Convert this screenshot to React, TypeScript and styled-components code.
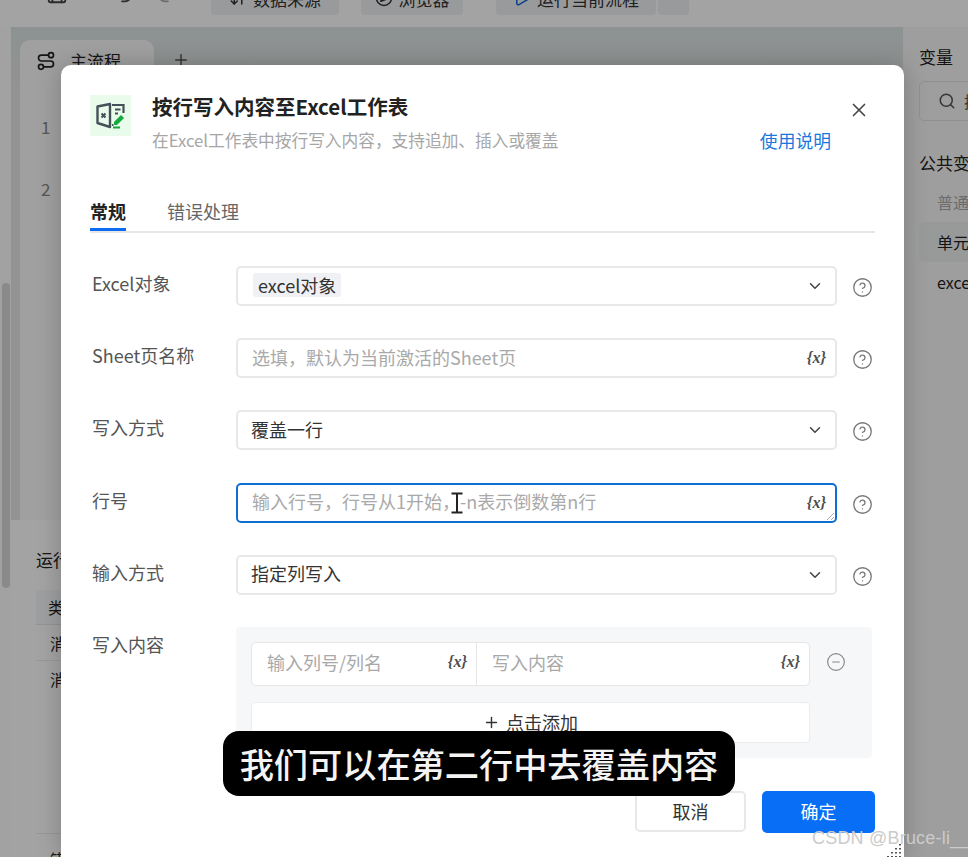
import React from 'react';
import styled, { createGlobalStyle } from 'styled-components';
import {
  ArrowDownUp,
  ChevronDown,
  CircleHelp,
  CircleMinus,
  Compass,
  Play,
  Plus,
  Redo2,
  Route,
  Save,
  Search,
  Undo2,
  X,
} from 'lucide-react';

const FONT = `"Noto Sans CJK SC", "Noto Sans", sans-serif`;

const GlobalStyle = createGlobalStyle`
  html, body {
    margin: 0;
    height: 100%;
    overflow: hidden;
    background: #fff;
    font-family: ${FONT};
  }
  * {
    box-sizing: border-box;
  }
`;

const ExcelIcon = () => (
  <svg width="41" height="41" viewBox="0 0 41 41" fill="none">
    <path d="M7.5 11.5 L20 9 V32 L7.5 28 Z" stroke="#465059" strokeWidth="2.4" strokeLinejoin="round" />
    <path d="M22 10 H33.5 V18 M22 30 H23.5" stroke="#465059" strokeWidth="2.2" />
    <path d="M11.5 18.5 L15.5 22.5 M15.5 18.5 L11.5 22.5" stroke="#465059" strokeWidth="2" />
    <path d="M25 14.5 H30.5 M25 18.5 H28" stroke="#465059" strokeWidth="2" />
    <path d="M24.5 27 L31 20.5 L33.5 23 L27 29.5 L24.5 29.5 Z" fill="#10a83c" stroke="#10a83c" strokeWidth="1" />
    <path d="M23 32.5 H30" stroke="#10a83c" strokeWidth="2" />
  </svg>
);

const TextCursor = () => (
  <svg width="14" height="22" viewBox="0 0 14 22" fill="none">
    <path d="M1.5 1.5 H12.5 M1.5 20.5 H12.5 M7 1.5 V20.5" stroke="#222" strokeWidth="2" />
  </svg>
);

const ResizeGrip = () => (
  <svg width="9" height="9" viewBox="0 0 9 9" fill="none">
    <path d="M1 8 L8 1 M5 8 L8 5" stroke="#a9a9a9" strokeWidth="1" />
  </svg>
);

const CornerDots = () => (
  <svg width="18" height="14" viewBox="0 0 18 14">
    {[
      [15, 1],
      [11, 5],
      [15, 5],
      [7, 9],
      [11, 9],
      [15, 9],
      [3, 13],
      [7, 13],
      [11, 13],
      [15, 13],
    ].map(([x, y]) => (
      <rect key={`${x}-${y}`} x={x} y={y} width="2" height="1.5" fill="#555" />
    ))}
  </svg>
);

const App = () => {
  return (
    <>
      <GlobalStyle />
      <Shell>
        <TopBar>
          <BarIcon $left={46}>
            <Save size={22} />
          </BarIcon>
          <BarIcon $left={44}>
            <Undo2 size={22} />
          </BarIcon>
          <BarIcon $left={22}>
            <Redo2 size={22} color="#aaa" />
          </BarIcon>
          <BarButton $left={33} $width={128}>
            <ArrowDownUp size={18} />
            数据来源
          </BarButton>
          <BarButton $left={22} $width={102}>
            <Compass size={18} />
            浏览器
          </BarButton>
          <BarButton $left={33} $width={160}>
            <Play size={18} color="#1565d8" />
            运行当前流程
          </BarButton>
          <BarButton $left={2} $width={31} />
        </TopBar>

        <Workspace>
          <Gutter>
            <ScrollThumb />
          </Gutter>

          <MainColumn>
            <Canvas>
              <TabStrip>
                <FlowTab>
                  <Route size={20} />
                  主流程
                </FlowTab>
                <AddTab>
                  <Plus size={18} />
                </AddTab>
              </TabStrip>
              <Editor>
                <LineNo>1</LineNo>
                <LineNo>2</LineNo>
              </Editor>
            </Canvas>

            <LogPanel>
              <LogTitle>运行日志</LogTitle>
              <LogTable>
                <LogHead>类型</LogHead>
                <LogRow>消息</LogRow>
                <LogRow $tall>消息</LogRow>
                <LogRow $tail>错误</LogRow>
              </LogTable>
            </LogPanel>
          </MainColumn>

          <VariablePanel>
            <PanelTitle>变量</PanelTitle>
            <SearchBox>
              <Search size={18} />
              搜索
            </SearchBox>
            <PanelHeading>公共变量</PanelHeading>
            <VarItem $muted>普通变量</VarItem>
            <VarItem $active>单元格</VarItem>
            <VarItem>excel对象</VarItem>
          </VariablePanel>
        </Workspace>

        <Overlay>
          <Modal>
            <CloseButton>
              <X size={22} strokeWidth={1.8} />
            </CloseButton>

            <Header>
              <IconTile>
                <ExcelIcon />
              </IconTile>
              <HeaderText>
                <Title>按行写入内容至Excel工作表</Title>
                <SubRow>
                  <Subtitle>在Excel工作表中按行写入内容，支持追加、插入或覆盖</Subtitle>
                  <HelpLink>使用说明</HelpLink>
                </SubRow>
              </HeaderText>
            </Header>

            <Tabs>
              <Tab $active>常规</Tab>
              <Tab>错误处理</Tab>
            </Tabs>

            <Form>
              <Row>
                <Label>Excel对象</Label>
                <Control>
                  <Tag>excel对象</Tag>
                  <Chevron size={18} />
                </Control>
                <Help size={21} strokeWidth={1.5} />
              </Row>

              <Row>
                <Label>Sheet页名称</Label>
                <Control>
                  <Placeholder>选填，默认为当前激活的Sheet页</Placeholder>
                  <VarToken>{'{x}'}</VarToken>
                </Control>
                <Help size={21} strokeWidth={1.5} />
              </Row>

              <Row>
                <Label>写入方式</Label>
                <Control>
                  <Value>覆盖一行</Value>
                  <Chevron size={18} />
                </Control>
                <Help size={21} strokeWidth={1.5} />
              </Row>

              <Row>
                <Label>行号</Label>
                <Control $focused>
                  <Placeholder>输入行号，行号从1开始，-n表示倒数第n行</Placeholder>
                  <VarToken>{'{x}'}</VarToken>
                  <CursorMark>
                    <TextCursor />
                  </CursorMark>
                  <GripMark>
                    <ResizeGrip />
                  </GripMark>
                </Control>
                <Help size={21} strokeWidth={1.5} />
              </Row>

              <Row>
                <Label>输入方式</Label>
                <Control>
                  <Value>指定列写入</Value>
                  <Chevron size={18} />
                </Control>
                <Help size={21} strokeWidth={1.5} />
              </Row>

              <Row>
                <Label>写入内容</Label>
                <ContentPanel>
                  <PairRow>
                    <PairGroup>
                      <PairCell $width={224}>
                        <PairPlaceholder>输入列号/列名</PairPlaceholder>
                        <VarToken>{'{x}'}</VarToken>
                      </PairCell>
                      <PairCell>
                        <PairPlaceholder>写入内容</PairPlaceholder>
                        <VarToken>{'{x}'}</VarToken>
                      </PairCell>
                    </PairGroup>
                    <RemoveIcon size={20} strokeWidth={1.4} />
                  </PairRow>
                  <AddButton>
                    <Plus size={17} />
                    点击添加
                  </AddButton>
                </ContentPanel>
              </Row>
            </Form>

            <Footer>
              <CancelButton>取消</CancelButton>
              <OkButton>确定</OkButton>
            </Footer>
          </Modal>
        </Overlay>

        <Caption>我们可以在第二行中去覆盖内容</Caption>
        <Dots>
          <CornerDots />
        </Dots>
        <Watermark>CSDN @Bruce-li__</Watermark>
      </Shell>
    </>
  );
};

export default App;

const Shell = styled.div`
  position: relative;
  display: grid;
  grid-template-rows: 27px 1fr;
  height: 100vh;
  overflow: hidden;
  background: #fff;
  color: #222;
`;

const TopBar = styled.div`
  display: flex;
  align-items: flex-end;
  padding-bottom: 12px;
  overflow: hidden;
  background: #fff;
`;

const BarIcon = styled.div<{ $left: number }>`
  display: flex;
  flex: none;
  align-items: flex-end;
  width: 22px;
  height: 22px;
  margin-bottom: 10px;
  margin-left: ${(p) => p.$left}px;
  color: #444;
`;

const BarButton = styled.div<{ $left: number; $width: number }>`
  display: flex;
  flex: none;
  align-items: center;
  justify-content: center;
  gap: 6px;
  width: ${(p) => p.$width}px;
  height: 34px;
  margin-left: ${(p) => p.$left}px;
  border-radius: 4px;
  background: #f0f1f3;
  font-size: 17px;
  color: #333;
`;

const Workspace = styled.div`
  display: flex;
  min-height: 0;
`;

const Gutter = styled.div`
  flex: none;
  width: 11px;
  padding: 256px 1px 0 2px;
  background: #fdfdfd;
`;

const ScrollThumb = styled.div`
  height: 305px;
  border-radius: 4px;
  background: #d8d8d8;
`;

const MainColumn = styled.div`
  display: flex;
  flex: 1;
  flex-direction: column;
  min-width: 0;
`;

const Canvas = styled.div`
  display: flex;
  flex: none;
  flex-direction: column;
  height: 493px;
  padding-top: 13px;
  background: linear-gradient(180deg, #dce5e4 0%, #e4e6e6 12%);
`;

const TabStrip = styled.div`
  display: flex;
  align-items: flex-start;
  height: 47px;
  padding-left: 9px;
`;

const FlowTab = styled.div`
  display: flex;
  align-items: center;
  gap: 14px;
  width: 134px;
  height: 47px;
  padding: 0 0 6px 16px;
  border-radius: 10px 10px 0 0;
  background: #fbfbfb;
  font-size: 17px;
`;

const AddTab = styled.div`
  display: flex;
  align-items: center;
  height: 40px;
  margin-left: 18px;
  color: #555;
`;

const Editor = styled.div`
  display: flex;
  flex: 1;
  flex-direction: column;
  gap: 38px;
  margin-left: 9px;
  padding: 28px 0 0 21px;
  background: #fbfbfb;
`;

const LineNo = styled.div`
  height: 24px;
  font-size: 17px;
  line-height: 24px;
  color: #888;
`;

const LogPanel = styled.div`
  flex: 1;
  min-height: 0;
  margin-top: 8px;
  margin-left: 9px;
  padding: 20px 0 0 16px;
  background: #fff;
`;

const LogTitle = styled.div`
  height: 24px;
  font-size: 17px;
  line-height: 24px;
`;

const LogTable = styled.div`
  margin-top: 18px;
  border-radius: 4px;
  background: #fff;
`;

const LogHead = styled.div`
  height: 35px;
  padding-left: 12px;
  border-bottom: 1px solid #e6e6e6;
  background: #f8f9fa;
  font-size: 16px;
  line-height: 35px;
`;

const LogRow = styled.div<{ $tall?: boolean; $tail?: boolean }>`
  height: ${(p) => (p.$tall ? 173 : 36)}px;
  padding-top: ${(p) => (p.$tail ? 7 : 0)}px;
  padding-left: 14px;
  border-bottom: 1px solid #ececec;
  font-size: 16px;
  line-height: 36px;
`;

const VariablePanel = styled.div`
  flex: none;
  width: 65px;
  padding: 17px 0 0 16px;
  overflow: hidden;
  white-space: nowrap;
  background: #f8f8f8;
`;

const PanelTitle = styled.div`
  height: 26px;
  font-size: 17px;
  line-height: 26px;
`;

const SearchBox = styled.div`
  display: flex;
  align-items: center;
  gap: 8px;
  width: 120px;
  height: 40px;
  margin-top: 11px;
  padding-left: 18px;
  border: 1px solid #e2e2e2;
  border-radius: 5px;
  font-size: 16px;
  color: #555;
`;

const PanelHeading = styled.div`
  height: 26px;
  margin-top: 29px;
  margin-bottom: 6px;
  font-size: 17px;
  line-height: 26px;
`;

const VarItem = styled.div<{ $muted?: boolean; $active?: boolean }>`
  width: 120px;
  height: 40px;
  padding-left: 18px;
  border-radius: 5px 0 0 5px;
  background: ${(p) => (p.$active ? '#eef1f1' : 'transparent')};
  font-size: 16px;
  line-height: 40px;
  color: ${(p) => (p.$muted ? '#aaa' : '#222')};
`;

const Overlay = styled.div`
  position: absolute;
  inset: 0;
  padding: 65px 64px 0 61px;
  background: rgba(0, 0, 0, 0.36);
`;

const Modal = styled.div`
  position: relative;
  height: 100%;
  padding: 30px 29px 0;
  border-radius: 10px 10px 0 0;
  background: #fff;
  box-shadow: 0 0 24px rgba(0, 0, 0, 0.22);
`;

const CloseButton = styled.div`
  position: absolute;
  top: 34px;
  right: 34px;
  display: flex;
  color: #444;
`;

const Header = styled.div`
  display: flex;
  gap: 21px;
  height: 72px;
`;

const IconTile = styled.div`
  flex: none;
  width: 41px;
  height: 41px;
  background: #e9fbea;
`;

const HeaderText = styled.div`
  flex: 1;
  min-width: 0;
`;

const Title = styled.div`
  height: 28px;
  margin-top: -3px;
  font-size: 20.5px;
  font-weight: 700;
  line-height: 28px;
  color: #222;
`;

const SubRow = styled.div`
  display: flex;
  align-items: center;
  justify-content: space-between;
  height: 26px;
  margin-top: 7px;
  padding-right: 44px;
`;

const Subtitle = styled.div`
  font-size: 16.7px;
  white-space: nowrap;
  color: #a6a6a6;
`;

const HelpLink = styled.div`
  font-size: 17.8px;
  color: #1a78dc;
`;

const Tabs = styled.div`
  display: flex;
  gap: 41px;
  height: 66px;
  padding-top: 31px;
  border-bottom: 2px solid #e7e7e7;
`;

const Tab = styled.div<{ $active?: boolean }>`
  position: relative;
  height: 33px;
  font-size: 18px;
  font-weight: ${(p) => (p.$active ? 700 : 400)};
  line-height: 26px;
  color: ${(p) => (p.$active ? '#222' : '#666')};

  ${(p) =>
    p.$active &&
    `
    &::after {
      content: '';
      position: absolute;
      left: 0;
      right: 0;
      bottom: 0;
      height: 3px;
      background: #0b6cf2;
    }
  `}
`;

const Form = styled.div`
  display: flex;
  flex-direction: column;
  gap: 32.2px;
  margin-top: 33px;
  padding-left: 2px;
`;

const Row = styled.div`
  display: flex;
  align-items: flex-start;
`;

const Label = styled.div`
  flex: none;
  width: 144px;
  padding-top: 4px;
  font-size: 18px;
  line-height: 26px;
  color: #555;
`;

const Control = styled.div<{ $focused?: boolean }>`
  position: relative;
  display: flex;
  flex: none;
  align-items: center;
  justify-content: space-between;
  width: 601px;
  height: 40px;
  padding: 0 19px 0 13px;
  border: ${(p) => (p.$focused ? '2px solid #0e6fd0' : '2px solid #e8e8e8')};
  border-radius: 5px;
  background: #fff;
`;

const Tag = styled.span`
  margin-bottom: 2px;
  margin-left: 2px;
  padding: 0 5px;
  border-radius: 3px;
  background: #eff1f4;
  font-size: 18px;
  line-height: 24px;
  color: #333;
`;

const Value = styled.span`
  margin-bottom: 3px;
  font-size: 18px;
  color: #333;
`;

const Placeholder = styled.span`
  margin-bottom: 3px;
  margin-left: 1px;
  font-size: 18px;
  color: #a9a9a9;
`;

const VarToken = styled.span`
  flex: none;
  margin-right: -10px;
  font-family: 'Liberation Serif', serif;
  font-size: 16px;
  font-style: italic;
  font-weight: 700;
  color: #4c4c4c;
`;

const Chevron = styled(ChevronDown)`
  flex: none;
  margin-right: -8px;
  color: #444;
`;

const Help = styled(CircleHelp)`
  flex: none;
  margin: 11px 0 0 15px;
  color: #777;
`;

const CursorMark = styled.span`
  position: absolute;
  top: 7px;
  left: 212px;
  display: flex;
`;

const GripMark = styled.span`
  position: absolute;
  right: 0;
  bottom: 0;
  display: flex;
`;

const ContentPanel = styled.div`
  flex: none;
  width: 636px;
  padding: 15px;
  border-radius: 4px;
  background: #f6f7f9;
`;

const PairRow = styled.div`
  display: flex;
  align-items: flex-start;
`;

const PairGroup = styled.div`
  display: flex;
  flex: none;
  width: 559px;
  height: 44px;
  border: 1px solid #e6e6e6;
  border-radius: 5px;
  background: #fff;
`;

const PairCell = styled.div<{ $width?: number }>`
  display: flex;
  flex: ${(p) => (p.$width ? `0 0 ${p.$width}px` : 1)};
  align-items: center;
  justify-content: space-between;
  padding: 0 19px 4px 15px;

  & + & {
    border-left: 1px solid #e6e6e6;
  }
`;

const PairPlaceholder = styled.span`
  font-size: 18px;
  color: #a9a9a9;
`;

const RemoveIcon = styled(CircleMinus)`
  flex: none;
  margin: 10px 0 0 16px;
  color: #888;
`;

const AddButton = styled.div`
  display: flex;
  align-items: center;
  justify-content: center;
  gap: 6px;
  width: 559px;
  height: 41px;
  margin-top: 16px;
  border: 1px solid #ececec;
  border-radius: 4px;
  background: #fff;
  font-size: 18px;
  color: #333;
`;

const Footer = styled.div`
  display: flex;
  justify-content: flex-end;
  gap: 16px;
  margin-top: 33px;
`;

const CancelButton = styled.div`
  width: 111px;
  height: 41px;
  border: 2px solid #e8e8e8;
  border-radius: 5px;
  background: #fff;
  font-size: 18px;
  line-height: 37px;
  text-align: center;
  color: #333;
`;

const OkButton = styled.div`
  width: 113px;
  height: 42px;
  border-radius: 5px;
  background: #076ef5;
  font-size: 18px;
  line-height: 40px;
  text-align: center;
  color: #fff;
`;

const Caption = styled.div`
  position: absolute;
  top: 731px;
  left: 223px;
  width: 512px;
  height: 65px;
  border-radius: 16px;
  background: #000;
  font-size: 34.2px;
  font-weight: 500;
  line-height: 65px;
  text-align: center;
  white-space: nowrap;
  color: #f4f4f4;
`;

const Watermark = styled.div`
  position: absolute;
  top: 826px;
  left: 812px;
  font-family: 'Liberation Sans', sans-serif;
  font-size: 18px;
  letter-spacing: 0.2px;
  line-height: 24px;
  white-space: nowrap;
  color: #cbcbcb;
`;

const Dots = styled.div`
  position: absolute;
  top: 843px;
  left: 884px;
  display: flex;
`;
